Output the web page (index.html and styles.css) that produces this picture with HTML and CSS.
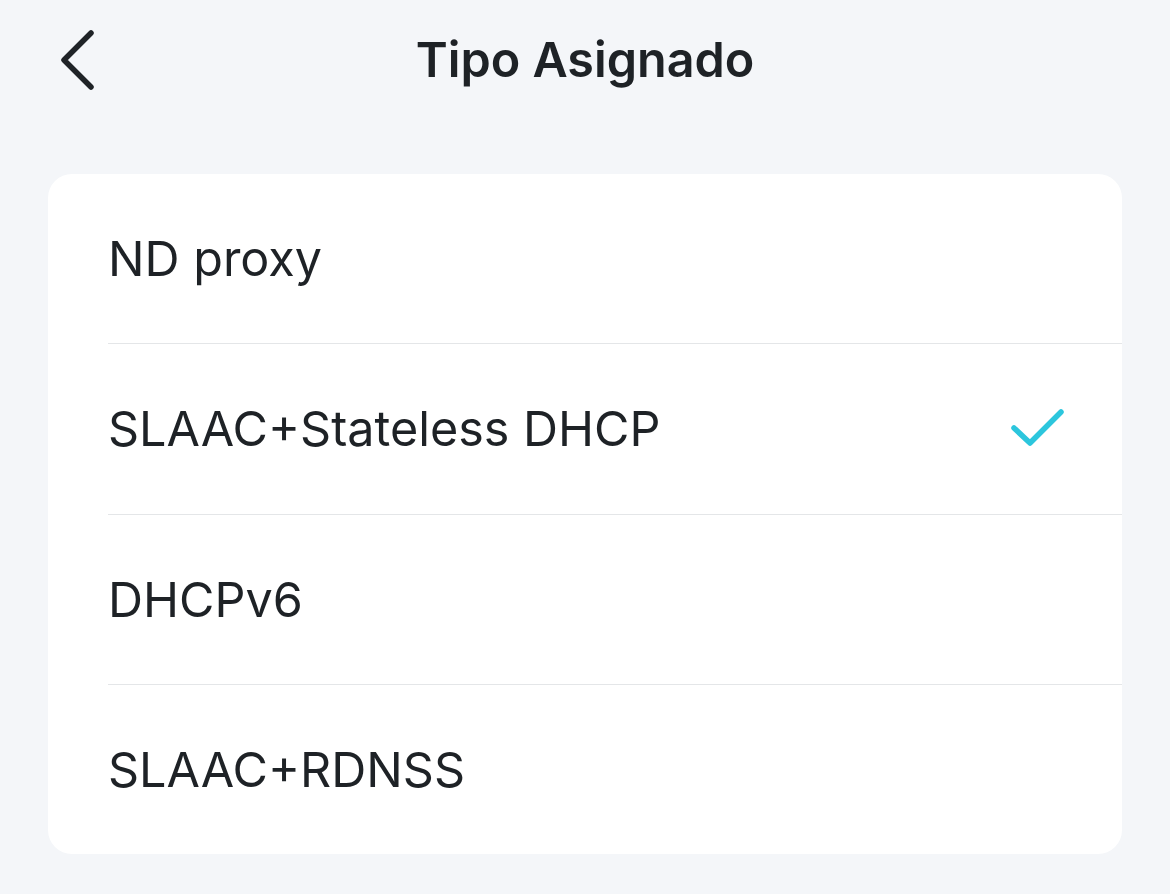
FILE: index.html
```html
<!DOCTYPE html>
<html lang="es">
<head>
<meta charset="utf-8">
<title>Tipo Asignado</title>
<link rel="stylesheet" href="styles.css">
</head>
<body>
<div class="page">
  <header class="nav">
    <button class="back" aria-label="Atrás">
      <svg width="44" height="70" viewBox="0 0 44 70"><path d="M37 8 L10 35 L37 62" fill="none" stroke="#1f2327" stroke-width="5.5" stroke-linecap="round" stroke-linejoin="round"/></svg>
    </button>
    <h1 class="title">Tipo Asignado</h1>
  </header>
  <ul class="card">
    <li class="row"><span class="label">ND proxy</span></li>
    <li class="row"><span class="label">SLAAC+Stateless DHCP</span>
      <svg class="check" width="60" height="44" viewBox="0 0 60 44"><path d="M5 20 L21 35 L52 4" fill="none" stroke="#2cc6dd" stroke-width="5.5" stroke-linecap="round" stroke-linejoin="round"/></svg>
    </li>
    <li class="row"><span class="label">DHCPv6</span></li>
    <li class="row"><span class="label">SLAAC+RDNSS</span></li>
  </ul>
</div>
</body>
</html>
```

FILE: styles.css
```css
* { box-sizing: border-box; }
html, body { margin: 0; padding: 0; }
body {
  background: #f4f6f9;
  font-family: Inter, "Noto Sans", sans-serif;
  color: #1e2226;
  width: 1170px;
  height: 894px;
  overflow: hidden;
}
.page { padding: 0 48px; }
.nav {
  position: relative;
  height: 124px;
  display: flex;
  align-items: center;
  justify-content: center;
}
.back {
  position: absolute;
  left: 6px;
  top: 25px;
  background: none;
  border: 0;
  padding: 0;
  width: 44px;
  height: 70px;
}
.back svg { display: block; }
.title {
  margin: 0 0 4px;
  font-size: 48.5px;
  font-weight: 600;
  letter-spacing: 0;
  line-height: 1;
}
.card {
  list-style: none;
  margin: 50px 0 0;
  padding: 0 0 0 60px;
  background: #fff;
  border-radius: 24px;
  height: 680px;
  display: flex;
  flex-direction: column;
}
.row {
  flex: 1;
  display: flex;
  align-items: center;
  justify-content: space-between;
  padding-right: 53px;
  border-bottom: 1.5px solid #e4e6e8;
}
.row:last-child { border-bottom: 0; }
.label {
  font-size: 48.5px;
  font-weight: 400;
  letter-spacing: 0;
}
.check { display: block; margin-top: 2px; }
```
